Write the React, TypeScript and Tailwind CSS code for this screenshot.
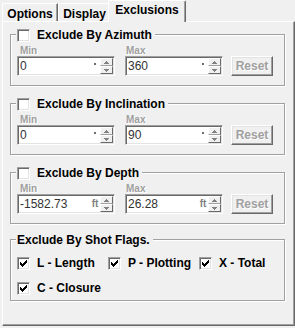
import React from "react";

const raised =
  "border border-t-white border-l-white border-r-[#696969] border-b-[#696969] shadow-[inset_-1px_-1px_0_#a0a0a0,inset_1px_1px_0_#e3e3e3]";
const sunken =
  "border border-t-[#a0a0a0] border-l-[#a0a0a0] border-r-white border-b-white shadow-[inset_1px_1px_0_#696969,inset_-1px_-1px_0_#e3e3e3]";

function Check() {
  return (
    <svg width="7" height="7" viewBox="0 0 7 7" shapeRendering="crispEdges" className="block">
      <path
        d="M6 0h1v1h-1z M5 1h2v1h-2z M0 2h1v1h-1z M4 2h3v1h-3z M0 3h2v1h-2z M3 3h3v1h-3z M0 4h5v1h-5z M1 5h3v1h-3z M2 6h1v1h-1z"
        fill="#000"
      />
    </svg>
  );
}

function CheckBox({ checked }: { checked?: boolean }) {
  return (
    <div className={`w-[13px] h-[13px] shrink-0 bg-white flex items-center justify-center ${sunken}`}>
      {checked && <Check />}
    </div>
  );
}

function Arrow({ up }: { up?: boolean }) {
  return (
    <svg width="5" height="3" viewBox="0 0 5 3" shapeRendering="crispEdges" className="block">
      <path
        d={up ? "M2 0h1v1h-1zM1 1h3v1h-3zM0 2h5v1h-5z" : "M0 0h5v1h-5zM1 1h3v1h-3zM2 2h1v1h-1z"}
        fill="#808080"
      />
    </svg>
  );
}

function Spinner() {
  return (
    <div className="w-[13px] flex flex-col">
      <div className="flex-1 flex items-center justify-center bg-[#f0f0f0] border border-t-white border-l-white border-r-[#696969] border-b-[#a0a0a0]">
        <Arrow up />
      </div>
      <div className="flex-1 flex items-center justify-center bg-[#f0f0f0] border border-t-white border-l-white border-r-[#696969] border-b-[#696969]">
        <Arrow />
      </div>
    </div>
  );
}

function Field({ value, unit }: { value: string; unit?: string }) {
  return (
    <div className={`w-[98px] h-[20px] flex bg-white p-[1px] ${sunken}`}>
      <span className="flex-1 pl-[1px] text-[12px] leading-[16px] text-[#333]">{value}</span>
      <span className="w-[10px] flex items-center justify-center text-[10px] font-bold leading-[16px] text-[#808080]">
        {unit ? unit : <span className="w-[2px] h-[2px] bg-[#6d6d6d] -mt-[5px]" />}
      </span>
      <Spinner />
    </div>
  );
}

function ResetButton() {
  return (
    <div
      className={`w-[42px] h-[20px] ml-[8px] flex items-center justify-center font-bold text-[12px] text-[#a0a0a0] [text-shadow:1px_1px_0_#fff] ${raised}`}
    >
      Reset
    </div>
  );
}

function Group({
  title,
  checkbox,
  className,
  children,
}: {
  title: string;
  checkbox?: boolean;
  className: string;
  children: React.ReactNode;
}) {
  return (
    <div className={`relative border border-[#a0a0a0] shadow-[inset_1px_1px_0_#fff,1px_1px_0_#fff] ${className}`}>
      <div className="absolute left-[5px] top-[-6px] flex items-start bg-[#f0f0f0] pl-[1px] pr-[3px] h-[13px]">
        {checkbox && <CheckBox />}
        <span className={`font-bold text-[12px] leading-[12px] text-black ${checkbox ? "ml-[7px]" : ""}`}>{title}</span>
      </div>
      {children}
    </div>
  );
}

function RangeGroup({ title, min, max, unit, className }: { title: string; min: string; max: string; unit?: string; className: string }) {
  return (
    <Group title={title} checkbox className={className}>
      <div className="pt-[11px] pl-[6px]">
        <div className="flex text-[10px] leading-[10px] font-bold text-[#a0a0a0] [text-shadow:1px_1px_0_#fff]">
          <span className="w-[108px] pl-[3px]">Min</span>
          <span className="pl-[1px]">Max</span>
        </div>
        <div className="flex">
          <Field value={min} unit={unit} />
          <div className="ml-[10px]">
            <Field value={max} unit={unit} />
          </div>
          <ResetButton />
        </div>
      </div>
    </Group>
  );
}

function Flag({ label }: { label: string }) {
  return (
    <div className="flex items-start h-[13px]">
      <CheckBox checked />
      <span className="ml-[7px] font-bold text-[12px] leading-[12px] text-black whitespace-nowrap">{label}</span>
    </div>
  );
}

export default function App() {
  return (
    <div className="w-[295px] h-[328px] bg-[#f0f0f0] overflow-hidden font-['Liberation_Sans',Arial,sans-serif] select-none">
      {/* tabs */}
      <div className="flex items-end h-[21px] pl-[2px]">
        <div className="w-[56px] h-[18px] flex justify-center pt-[3px] font-bold text-[12px] leading-[14px] rounded-tl-[2px] border-t border-l border-t-white border-l-white border-r border-r-[#696969] shadow-[inset_-1px_0_0_#a0a0a0]">
          Options
        </div>
        <div className="w-[52px] h-[18px] flex justify-center pt-[3px] font-bold text-[12px] leading-[14px] rounded-tl-[2px] border-t border-l border-t-white border-l-white">
          Display
        </div>
        <div className="relative z-10 -ml-[2px] -mb-[1px] w-[78px] h-[22px] flex justify-center pt-[2px] font-bold text-[12px] leading-[14px] bg-[#f0f0f0] rounded-t-[2px] border-t border-l border-t-white border-l-white border-r border-r-[#696969] shadow-[inset_-1px_0_0_#a0a0a0]">
          Exclusions
        </div>
      </div>

      {/* panel */}
      <div className="ml-[2px] w-[293px] h-[305px] pt-[12px] pl-[7px] border border-t-white border-l-white border-r-[#696969] border-b-[#696969] shadow-[inset_-1px_-1px_0_#a0a0a0]">
        <RangeGroup title="Exclude By Azimuth" min="0" max="360" className="w-[275px] h-[52px]" />
        <RangeGroup title="Exclude By Inclination" min="0" max="90" className="w-[275px] h-[52px] mt-[17px]" />
        <RangeGroup title="Exclude By Depth" min="-1582.73" max="26.28" unit="ft" className="w-[275px] h-[52px] mt-[17px]" />
        <Group title="Exclude By Shot Flags." className="w-[275px] h-[62px] mt-[15px]">
          <div className="pt-[17px] pl-[6px] grid grid-cols-[91px_91px_91px] gap-y-[12px]">
            <Flag label="L - Length" />
            <Flag label="P - Plotting" />
            <Flag label="X - Total" />
            <Flag label="C - Closure" />
          </div>
        </Group>
      </div>
    </div>
  );
}
